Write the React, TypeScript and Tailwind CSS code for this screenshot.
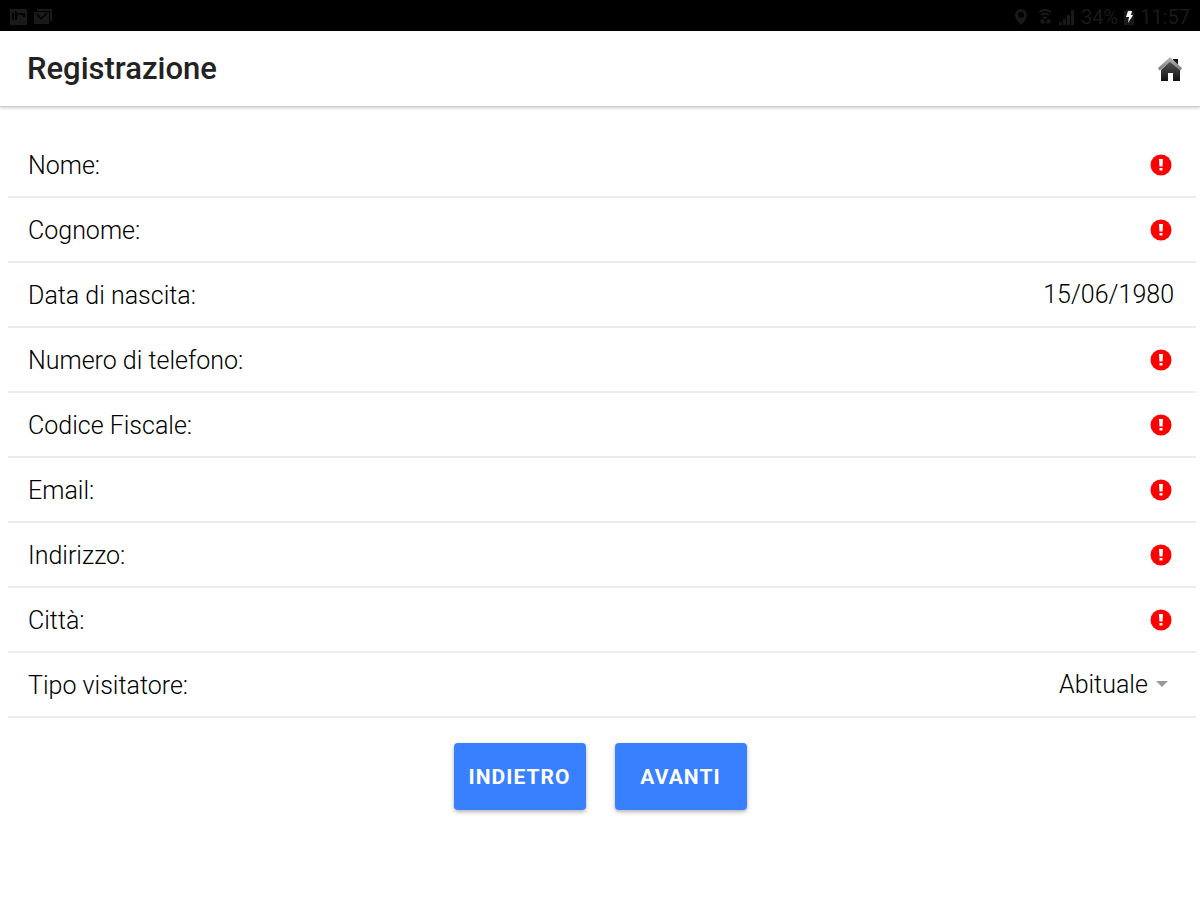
import { useState } from "react";

const FIELDS = [
    { id: "nome", label: "Nome:", type: "text" },
    { id: "cognome", label: "Cognome:", type: "text" },
    { id: "nascita", label: "Data di nascita:", type: "text" },
    { id: "telefono", label: "Numero di telefono:", type: "tel" },
    { id: "codiceFiscale", label: "Codice Fiscale:", type: "text" },
    { id: "email", label: "Email:", type: "email" },
    { id: "indirizzo", label: "Indirizzo:", type: "text" },
    { id: "citta", label: "Città:", type: "text" },
];

function StatusBar() {
    return (
        <div className="flex h-[31px] items-center justify-between bg-black px-2.5 pt-0.5 text-[#1a1a1a]">
            <div className="flex items-center gap-1.5">
                <svg className="h-4 w-[17px]" viewBox="0 0 17 16" fill="currentColor">
                    <path d="M0 0h17v16H0z" />
                    <path d="M3 4v7M6 11V4l2 2M9 5h5v3" fill="none" stroke="#000" strokeWidth="2" />
                </svg>
                <svg className="h-4 w-5" viewBox="0 0 20 16" fill="currentColor">
                    <path d="M4 0h15v12h-2V2H4z" />
                    <path d="M1 3h15v12H1z" />
                    <path d="M4 5l4 5 6-6" fill="none" stroke="#000" strokeWidth="1.500" />
                </svg>
            </div>
            <div className="flex items-center gap-1.5 text-[19px] leading-6">
                <svg className="mr-1 h-4 w-3" viewBox="0 0 12 16" fill="currentColor">
                    <path fillRule="evenodd" d="M6 0a6 6 0 0 0-6 6c0 4 6 10 6 10s6-6 6-10a6 6 0 0 0-6-6zm0 3a3 3 0 1 1 0 6 3 3 0 0 1 0-6z" />
                </svg>
                <svg className="h-4 w-4" viewBox="0 0 16 16" fill="none" stroke="currentColor" strokeWidth="2">
                    <path d="M2 3q6-4 12 0M4 6q4-3 8 0" />
                    <path d="M6 8h4l-2 2zM4 11h3v3H4zM10 11h3v3h-3z" fill="currentColor" strokeWidth="1" />
                </svg>
                <svg className="h-4 w-4" viewBox="0 0 16 16" fill="currentColor">
                    <path d="M0 13h3v3H0zM4 10h3v6H4zM8 6h3v10H8zM12 1h3v15h-3z" />
                </svg>
                <span className="text-[20px]">34%</span>
                <svg className="h-4 w-2.5" viewBox="0 0 10 16">
                    <path d="M3 0h4v2h3v14H0V2h3z" fill="currentColor" />
                    <path d="M4 2h4L7 6h2l-5 8 1-6H2z" fill="#fff" />
                </svg>
                <span className="text-[20px]">11:57</span>
            </div>
        </div>
    );
}

function HomeIcon() {
    return (
        <svg className="h-6 w-6" viewBox="0 0 24 24" aria-hidden="true">
            <defs>
                <linearGradient id="roof" x1="0" y1="0" x2="0" y2="1">
                    <stop offset="0" stopColor="#bbb" />
                    <stop offset="1" stopColor="#777" />
                </linearGradient>
                <linearGradient id="walls" x1="0" y1="0" x2="0" y2="1">
                    <stop offset="0" stopColor="#555" />
                    <stop offset="1" stopColor="#111" />
                </linearGradient>
            </defs>
            <path d="M15 2h5v7l-5-3z" fill="#111" />
            <path d="M12 4l10 9v11h-7v-8h-5v8H3V13z" fill="url(#walls)" />
            <path d="M12 0l12 11-1.500 2.500L12 5 1.500 13.500 0 11z" fill="url(#roof)" />
        </svg>
    );
}

function RequiredIcon() {
    return (
        <svg className="mr-0.5 h-[22px] w-[22px] shrink-0" viewBox="0 0 22 22" role="img" aria-label="Obbligatorio">
            <circle cx="11" cy="11" r="10.500" fill="#ff0000" />
            <path d="M9 5h4l-.5 7.500h-3z" fill="#fff" />
            <path d="M9.500 14h3v2.500h-3z" fill="#fff" />
        </svg>
    );
}

export default function App() {
    const [values, setValues] = useState<Record<string, string>>({ nascita: "15/06/1980" });
    const rowClass = "flex h-[65px] items-center border-b-2 border-[#ececec] pl-5 pr-[22px]";
    const buttonClass = "h-[67px] w-[132px] rounded bg-[#3880ff] shadow-[0_2px_4px_rgba(0,0,0,0.3)]";

    return (
        <div className="min-h-screen bg-white font-[Roboto,sans-serif] text-[#222]">
            <StatusBar />
            <header className="flex h-[76px] items-center justify-between border-b border-[#cfcfcf] pl-[27px] pr-[18px] shadow-[0_1px_3px_rgba(0,0,0,0.2)]">
                <h1 className="text-[31px] leading-9 font-medium">Registrazione</h1>
                <button type="button" aria-label="Home">
                    <HomeIcon />
                </button>
            </header>

            <form className="pt-[26px]" onSubmit={(e) => e.preventDefault()}>
                <div className="ml-2 mr-1 text-[25px] leading-8 font-light text-black">
                    {FIELDS.map((field) => (
                        <div key={field.id} className={rowClass}>
                            <label htmlFor={field.id} className="shrink-0 pt-0.5">{field.label}</label>
                            <input
                                id={field.id}
                                type={field.type}
                                value={values[field.id] ?? ""}
                                onChange={(e) => setValues({ ...values, [field.id]: e.target.value })}
                                className="min-w-0 flex-1 bg-transparent text-right outline-none"
                            />
                            {!values[field.id] && <RequiredIcon />}
                        </div>
                    ))}
                    <div className={rowClass}>
                        <label htmlFor="tipo" className="flex-1 pt-0.5">Tipo visitatore:</label>
                        <div className="relative">
                            <select id="tipo" className="appearance-none bg-transparent pr-[26px] outline-none">
                                <option>Abituale</option>
                            </select>
                            <svg className="pointer-events-none absolute right-1.5 top-3 h-1.5 w-3" viewBox="0 0 12 6" fill="#999">
                                <path d="M0 0h12L6 6z" />
                            </svg>
                        </div>
                    </div>
                </div>

                <div className="flex justify-center gap-[29px] pt-[25px] text-[21px] leading-7 font-bold tracking-wider text-white">
                    <button type="button" className={buttonClass}>INDIETRO</button>
                    <button type="submit" className={buttonClass}>AVANTI</button>
                </div>
            </form>
        </div>
    );
}
